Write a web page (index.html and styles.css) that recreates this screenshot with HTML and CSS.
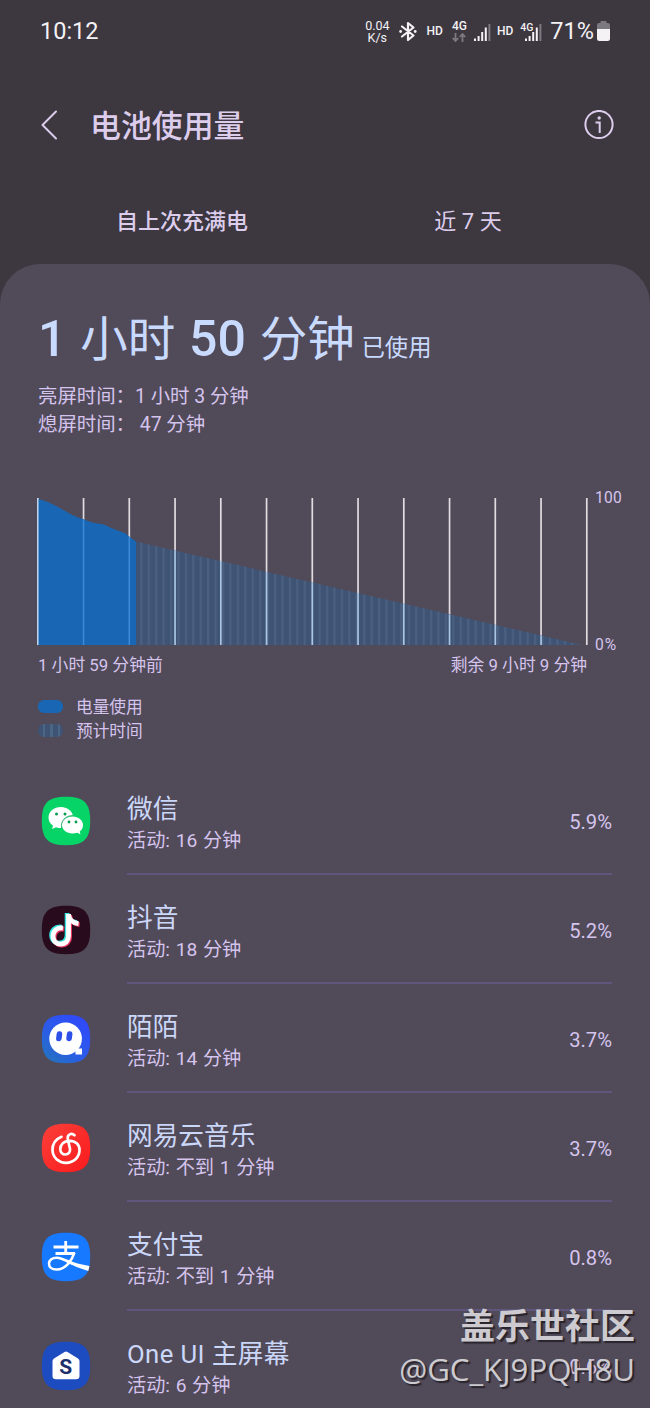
FILE: index.html
```
<!DOCTYPE html>
<html lang="zh-CN">
<head>
  <meta charset="UTF-8">
  <meta name="viewport" content="width=device-width, initial-scale=1.0">
  <title>电池使用量</title>
  <link rel="stylesheet" href="styles.css">
</head>
<body>
  <div class="status-bar">
    <span class="clock">10:12</span>
    <div class="status-icons">
      <span class="net-speed">0.04<br>K/s</span>
      <svg class="bluetooth" width="18" height="21" viewBox="0 0 18 21">
        <path d="M3 5.5L14.5 14.5L9 19V2L14.5 6.5L3 15.5" fill="none" stroke="#f4f2f5" stroke-width="2.2" stroke-linejoin="round" stroke-linecap="round"/>
        <circle cx="1.6" cy="10.5" r="1.4" fill="#f4f2f5"/>
        <circle cx="16.2" cy="10.5" r="1.4" fill="#f4f2f5"/>
      </svg>
      <span class="hd">HD</span>
      <div class="mobile-data">
        <span class="net-type">4G</span>
        <svg width="14" height="9" viewBox="0 0 14 9">
          <path d="M3.5 0V8M0.8 5L3.5 8L6.2 5M10.5 9V1M7.8 4L10.5 1L13.2 4" fill="none" stroke="#7d7980" stroke-width="1.8"/>
        </svg>
      </div>
      <svg class="signal" width="17" height="17" viewBox="0 0 17 17">
        <path d="M0 14.5h2V17h-2zM3.6 12h2v5h-2zM7.2 8h2v9h-2zM10.8 3.5h2V17h-2z" fill="#f4f2f5"/>
        <path d="M14.4 0h2v17h-2z" fill="#7d7980"/>
      </svg>
      <span class="hd hd-second">HD</span>
      <div class="signal-second">
        <span class="net-type net-type-small">4G</span>
        <svg width="17" height="17" viewBox="0 0 17 17">
          <path d="M0 14.5h2V17h-2zM3.6 12h2v5h-2zM7.2 8h2v9h-2zM10.8 3.5h2V17h-2z" fill="#f4f2f5"/>
          <path d="M14.4 0h2v17h-2z" fill="#7d7980"/>
        </svg>
      </div>
      <span class="battery-level">71%</span>
      <svg class="battery" width="13" height="20" viewBox="0 0 13 20">
        <path d="M3.5 2V1Q3.5 0 4.5 0H8.5Q9.5 0 9.5 1V2H11Q13 2 13 4V8H0V4Q0 2 2 2Z" fill="#7d7980"/>
        <path d="M0 8H13V17.5Q13 20 10.5 20H2.5Q0 20 0 17.5Z" fill="#f4f2f5"/>
      </svg>
    </div>
  </div>

  <header class="header">
    <svg class="back" width="18" height="30" viewBox="0 0 18 30">
      <path d="M16 1.5L2.5 15L16 28.5" fill="none" stroke="#dccdec" stroke-width="2" stroke-linecap="round" stroke-linejoin="round"/>
    </svg>
    <h1 class="title">电池使用量</h1>
    <svg class="info" width="30" height="30" viewBox="0 0 30 30">
      <circle cx="15" cy="14.5" r="13.6" fill="none" stroke="#dccdec" stroke-width="2"/>
      <circle cx="15.2" cy="8" r="1.7" fill="#dccdec"/>
      <path d="M11.5 12.5H15.7V23" fill="none" stroke="#dccdec" stroke-width="2"/>
    </svg>
  </header>

  <nav class="tabs">
    <span class="tab tab-active">自上次充满电</span>
    <span class="tab">近 7 天</span>
  </nav>

  <main class="card">
    <p class="total"><b>1</b> 小时 <b>50</b> 分钟 <span class="total-note">已使用</span></p>
    <p class="screen-time">亮屏时间：1 小时 3 分钟</p>
    <p class="screen-time">熄屏时间： 47 分钟</p>

    <div class="chart">
      <svg width="551" height="148" viewBox="0 0 551 148">
        <defs>
          <pattern id="stripes" x="103.2" y="0" width="7.43" height="148" patternUnits="userSpaceOnUse">
            <rect width="7.43" height="148" fill="#3f5474"/>
            <rect width="2.2" height="148" fill="#4b6080"/>
          </pattern>
        </defs>
        <path class="grid" d="M0.8 0V147M46.55 0V147M92.3 0V147M138.05 0V147M183.8 0V147M229.55 0V147M275.3 0V147M321.05 0V147M366.8 0V147M412.55 0V147M458.3 0V147M504.05 0V147M549.8 0V147"/>
        <path d="M99 43.5L545 147H99Z" fill="url(#stripes)"/>
        <path d="M1 1C10 3 15 6 20 8.5C30 14 38 19 46 21C56 26 62 25 68 27C76 31 82 33 88 35Q95 41 99 43.5V147H1Z" fill="#1967b4"/>
        <path class="grid-used" d="M46.55 21.5V147M92.3 39V147"/>
        <path class="grid-estimated" d="M138.05 52.5V147M183.8 63V147M229.55 74V147M275.3 84.5V147M321.05 95V147M366.8 105.5V147M412.55 116.5V147M458.3 127V147M504.05 137.5V147"/>
        <path d="M0.8 0V147" stroke="#bdd3ea" stroke-width="1.5"/>
      </svg>
      <div class="chart-scale">
        <span>100</span>
        <span class="scale-zero">0%</span>
      </div>
    </div>
    <div class="chart-range">
      <span>1 小时 59 分钟前</span>
      <span>剩余 9 小时 9 分钟</span>
    </div>

    <ul class="legend">
      <li><i class="swatch swatch-used"></i>电量使用</li>
      <li><i class="swatch swatch-estimated"></i>预计时间</li>
    </ul>

    <ul class="apps">
      <li class="app">
        <svg class="app-icon" width="50" height="50" viewBox="0 0 50 50">
          <path d="M25 .8C43 .8 49.2 7 49.2 25S43 49.2 25 49.2S.8 43 .8 25S7 .8 25 .8Z" fill="#06d467"/>
          <path d="M20 11C13 11 7.5 15.5 7.5 21.5C7.5 25 9.2 27.7 12 29.7L11 33L15 31.2Q18 32.3 21 32C20 25 25 19.5 32 20C31 14.500 26 11 20 11Z" fill="#fff"/>
          <path d="M31.5 20.5C25.5 20.5 21 24.3 21 29S25.5 37.5 31.5 37.5Q34 37.5 36.2 36.8L39.5 38.3L38.7 35.5C41 33.8 42 31.7 42 29C42 24.3 37.5 20.5 31.5 20.5Z" fill="#fff"/>
          <path d="M20.6 32.2C19.2 25 24.500 19.4 32 19.6" fill="none" stroke="#079c50" stroke-width=".8"/>
          <g fill="#079c50"><circle cx="15.5" cy="18" r="1.5"/><circle cx="24" cy="18" r="1.5"/><circle cx="28" cy="26" r="1.4"/><circle cx="35" cy="26" r="1.4"/></g>
        </svg>
        <div class="app-body">
          <div>
            <p class="app-name">微信</p>
            <p class="app-time">活动: 16 分钟</p>
          </div>
          <span class="app-percent">5.9%</span>
        </div>
      </li>
      <li class="app">
        <svg class="app-icon" width="50" height="50" viewBox="0 0 50 50">
          <path d="M25 .8C43 .8 49.2 7 49.2 25S43 49.2 25 49.2S.8 43 .8 25S7 .8 25 .8Z" fill="#280b1d"/>
          <g fill="none" stroke-width="4.8">
            <path d="M21.500 22.5C15 21.5 11.5 26 11.5 30.5C11.5 35.5 15 38.5 19 38.5C24 38.5 27 35 27 30.5V8.5C27.5 14 31.5 17.5 37 18" stroke="#35e4df" transform="translate(-.9 -.4)"/>
            <path d="M21.5 22.5C15 21.5 11.5 26 11.5 30.5C11.5 35.5 15 38.5 19 38.5C24 38.5 27 35 27 30.5V8.5C27.5 14 31.5 17.5 37 18" stroke="#e83660" transform="translate(1.6 1.7)"/>
            <path d="M21.5 22.5C15 21.5 11.5 26 11.5 30.5C11.5 35.5 15 38.5 19 38.5C24 38.5 27 35 27 30.5V8.5C27.5 14 31.5 17.5 37 18" stroke="#fff" transform="translate(.5 .6)"/>
          </g>
        </svg>
        <div class="app-body">
          <div>
            <p class="app-name">抖音</p>
            <p class="app-time">活动: 18 分钟</p>
          </div>
          <span class="app-percent">5.2%</span>
        </div>
      </li>
      <li class="app">
        <svg class="app-icon" width="50" height="50" viewBox="0 0 50 50">
          <defs>
            <linearGradient id="momo" x1="0" y1="1" x2=".8" y2="0">
              <stop offset="0" stop-color="#2377b5"/>
              <stop offset=".45" stop-color="#2a5de6"/>
              <stop offset="1" stop-color="#3048fb"/>
            </linearGradient>
          </defs>
          <path d="M25 .8C43 .8 49.2 7 49.2 25S43 49.2 25 49.2S.8 43 .8 25S7 .8 25 .8Z" fill="url(#momo)"/>
          <circle cx="24.600" cy="24.800" r="16.3" fill="#fff"/>
          <path d="M36 30L34.500 34.5H41V40.5H34.5V37L28 38Z" fill="#fff"/>
          <g fill="#2c50e8"><rect x="15.4" y="17.3" width="5.6" height="10" rx="2.8" transform="rotate(7 18 22)"/><rect x="25.600" y="17.3" width="5.6" height="10" rx="2.8" transform="rotate(7 29 22)"/></g>
        </svg>
        <div class="app-body">
          <div>
            <p class="app-name">陌陌</p>
            <p class="app-time">活动: 14 分钟</p>
          </div>
          <span class="app-percent">3.7%</span>
        </div>
      </li>
      <li class="app">
        <svg class="app-icon" width="50" height="50" viewBox="0 0 50 50">
          <defs>
            <linearGradient id="netease" x1="0" y1="0" x2="1" y2="1">
              <stop offset="0" stop-color="#fb4039"/>
              <stop offset="1" stop-color="#fa1a1d"/>
            </linearGradient>
          </defs>
          <path d="M25 .8C43 .8 49.2 7 49.2 25S43 49.2 25 49.2S.8 43 .8 25S7 .8 25 .8Z" fill="url(#netease)"/>
          <path d="M20.5 13.8C14 16.500 11.2 21.5 11.5 27.5C12 35 18 39.8 25 39.8C33 39.8 38.5 34 38.5 27C38.5 21.5 34.5 17.8 28.5 17.8C22.5 17.8 19.3 22 19.3 26C19.3 29.5 21.5 31.5 24.3 31.5C27.5 31.5 29.5 29 29 26L26.8 16C26 11.500 30.5 9.3 33.5 12.3" fill="none" stroke="#fff" stroke-width="2.7" stroke-linecap="round"/>
        </svg>
        <div class="app-body">
          <div>
            <p class="app-name">网易云音乐</p>
            <p class="app-time">活动: 不到 1 分钟</p>
          </div>
          <span class="app-percent">3.7%</span>
        </div>
      </li>
      <li class="app">
        <svg class="app-icon" width="50" height="50" viewBox="0 0 50 50">
          <path d="M25 .8C43 .8 49.2 7 49.2 25S43 49.2 25 49.2S.8 43 .8 25S7 .8 25 .8Z" fill="#1779ff"/>
          <g fill="none" stroke="#fff">
            <path d="M12.5 15H37.5M24.7 9V21.5M14.5 21.5H34" stroke-width="2.8"/>
            <path d="M33.5 20.5C31 28 25 37.5 15.5 37.5C10.5 37.5 8 34.8 8 31.7C8 28 11.5 25.7 15.5 25.7C21 25.7 27 29.5 32 32" stroke-width="2.5"/>
          </g>
          <path d="M26 27.5Q36 32 48.500 34L47.3 39Q36 36 25 30Z" fill="#fff"/>
        </svg>
        <div class="app-body">
          <div>
            <p class="app-name">支付宝</p>
            <p class="app-time">活动: 不到 1 分钟</p>
          </div>
          <span class="app-percent">0.8%</span>
        </div>
      </li>
      <li class="app">
        <svg class="app-icon" width="50" height="50" viewBox="0 0 50 50">
          <path d="M25 .8C43 .8 49.2 7 49.2 25S43 49.2 25 49.2S.8 43 .8 25S7 .8 25 .8Z" fill="#1d4bc0"/>
          <path d="M23.5 11Q25 10 26.5 11L37 17.5Q38.5 18.5 38.5 20V35Q38.5 38.3 35 38.3H15Q11.5 38.3 11.5 35V20Q11.5 18.5 13 17.5Z" fill="#fff"/>
          <text class="home-letter" x="24.8" y="33" text-anchor="middle">S</text>
        </svg>
        <div class="app-body">
          <div>
            <p class="app-name app-name-home">One UI 主屏幕</p>
            <p class="app-time">活动: 6 分钟</p>
          </div>
          <span class="app-percent">0.6%</span>
        </div>
      </li>
    </ul>
  </main>

  <div class="watermark">
    <p class="watermark-site">盖乐世社区</p>
    <p class="watermark-user">@GC_KJ9PQH8U</p>
  </div>
</body>
</html>
```
FILE: styles.css
```
* {
  --page-color: #3d3740;
  --card-color: #514a59;
  --title-color: #dccdec;
  --text-color: #d5c4ed;
  --name-color: #cbd7f8;
  --divider-color: #5f567e;
  --used-color: #1967b4;
  box-sizing: border-box;
}
body {
  position: relative;
  width: 650px;
  height: 1408px;
  margin: 0;
  overflow: hidden;

  background-color: var(--page-color);
  color: var(--text-color);
  font-family: Roboto, "Noto Sans CJK SC", sans-serif;
}
p, h1, ul {
  margin: 0;
  padding: 0;
}
ul {
  list-style: none;
}
svg {
  display: block;
  flex: none;
}

.status-bar {
  display: flex;
  justify-content: space-between;
  align-items: center;
  height: 62px;
  padding: 0 40px;

  color: #f4f2f5;
}
.clock {
  font-size: 23.5px;
}
.status-icons {
  display: flex;
  align-items: center;
}
.net-speed {
  padding-top: 1px;
  font-size: 12.5px;
  line-height: 12px;
  text-align: center;
}
.bluetooth {
  margin-left: 9px;
}
.hd {
  margin-left: 10px;
  font-size: 12px;
  font-weight: 500;
}
.hd-second {
  margin-left: 6px;
}
.mobile-data {
  display: flex;
  flex-direction: column;
  align-items: center;
  gap: 1px;
  margin-left: 9px;
}
.net-type {
  font-size: 12px;
  font-weight: 500;
  line-height: 11px;
}
.net-type-small {
  font-size: 10.5px;
}
.signal {
  margin: 2px 0 0 7px;
}
.signal-second {
  display: flex;
  align-items: flex-start;
  margin-left: 7px;
}
.signal-second svg {
  margin: 2px 0 0 -8px;
}
.battery-level {
  margin-left: 8px;
  font-size: 23.5px;
}
.battery {
  margin-left: 3px;
}

.header {
  display: flex;
  align-items: center;
  height: 126px;
  padding: 0 36px 0 40px;
}
.title {
  flex: 1;
  margin: -3px 0 0 32px;

  color: var(--title-color);
  font-size: 30.9px;
  font-weight: 500;
}

.tabs {
  display: grid;
  grid-template-columns: 286px 286px;
  justify-content: center;
  height: 76px;

  color: var(--title-color);
  font-size: 22px;
  line-height: 67px;
  text-align: center;
}
.tab-active {
  font-weight: 500;
}

.card {
  height: 1144px;
  padding: 44px 38px 0;

  background-color: var(--card-color);
  border-radius: 40px 40px 0 0;
}
.total {
  height: 75px;

  color: #c9daff;
  font-size: 47.5px;
  line-height: 62px;
  white-space: nowrap;
  word-spacing: 2px;
}
.total b {
  font-size: 50px;
  font-weight: 500;
}
.total-note {
  margin-left: -7px;
  font-size: 23.4px;
}
.screen-time {
  font-size: 19.4px;
  line-height: 28px;
}

.chart {
  display: flex;
  gap: 7px;
  height: 148px;
  margin: 59px -24px 0 -1px;
}
.grid {
  stroke: #e2dce0;
  stroke-width: 1.7;
}
.grid-used {
  stroke: #3d8ad8;
  stroke-width: 1.5;
}
.grid-estimated {
  stroke: #a9c6e4;
  stroke-width: 1.7;
}
.chart-scale {
  display: flex;
  flex-direction: column;
  justify-content: space-between;
  margin: -10px 0 -9px;

  font-size: 15.600px;
  letter-spacing: .2px;
  line-height: 20px;
}
.scale-zero {
  letter-spacing: 1px;
}
.chart-range {
  display: flex;
  justify-content: space-between;
  width: 549px;
  height: 48px;

  font-size: 16.8px;
  line-height: 38px;
}

.legend li {
  display: flex;
  align-items: center;
  height: 24px;

  font-size: 16.7px;
}
.swatch {
  width: 25px;
  height: 13px;
  margin-right: 13px;

  border-radius: 6px;
}
.swatch-used {
  background-color: var(--used-color);
}
.swatch-estimated {
  background: repeating-linear-gradient(90deg, #3f5474 0 5px, #4b6685 5px 7.4px);
}

.apps {
  margin-top: 24px;
}
.app {
  display: flex;
  height: 109px;
  padding-left: 3px;
}
.app-icon {
  margin: 30px 36px 0 0;
}
.app-body {
  display: flex;
  flex: 1;
  justify-content: space-between;
  padding-top: 26px;

  border-bottom: 2px solid var(--divider-color);
}
.app-name {
  color: var(--name-color);
  font-size: 25.7px;
  line-height: 34px;
}
.app-name-home {
  letter-spacing: .4px;
}
.app-time {
  font-size: 19.2px;
  line-height: 30px;
  word-spacing: .9px;
}
.app-percent {
  padding-top: 16px;
  font-size: 20.2px;
  line-height: 28px;
}
.home-letter {
  fill: #1c2f6c;
  font-size: 21px;
  font-weight: 700;
}

.watermark {
  position: absolute;
  right: 15px;
  bottom: 17px;

  color: #cdcbcf;
  text-align: right;
  text-shadow: 2px 2px 1px #28242c;
}
.watermark-site {
  font-family: "Noto Sans CJK SC", sans-serif;
  font-size: 35px;
  font-weight: 700;
  line-height: 46px;
}
.watermark-user {
  font-family: "Open Sans", sans-serif;
  font-size: 31.2px;
  line-height: 44px;
}
```
